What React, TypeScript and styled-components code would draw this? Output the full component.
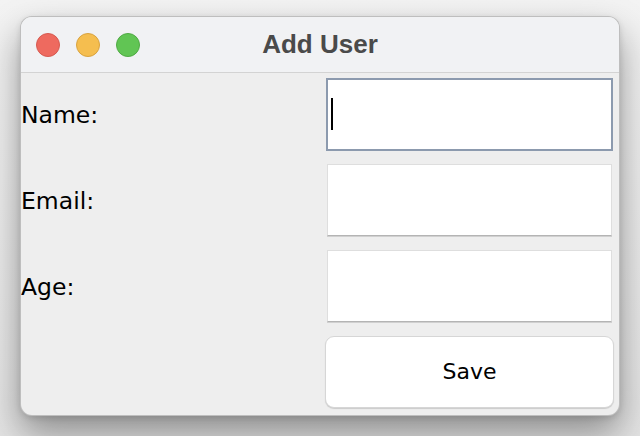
import React from "react";
import styled, { createGlobalStyle } from "styled-components";

const Global = createGlobalStyle`
  html, body { margin: 0; padding: 0; }
  body {
    width: 640px;
    height: 436px;
    overflow: hidden;
    background: linear-gradient(#f3f3f3, #e4e4e4);
    font-family: "DejaVu Sans", "Liberation Sans", sans-serif;
  }
  #root { padding: 16px 20px; }
`;

const Window = styled.div`
  width: 600px;
  height: 400px;
  box-sizing: border-box;
  border-radius: 12px;
  overflow: hidden;
  background: #eeeeee;
  border: 1px solid rgba(0, 0, 0, 0.2);
  box-shadow: 0 18px 36px rgba(0, 0, 0, 0.38), 0 2px 6px rgba(0, 0, 0, 0.12);
  display: flex;
  flex-direction: column;
`;

const TitleBar = styled.div`
  height: 55px;
  flex: none;
  background: #f1f2f4;
  border-bottom: 1px solid #d3d3d3;
  display: flex;
  align-items: center;
  padding-left: 15px;
  gap: 16px;
  position: relative;
`;

const Light = styled.div<{ $c: string; $b: string }>`
  width: 24px;
  height: 24px;
  border-radius: 50%;
  box-sizing: border-box;
  background: ${(p) => p.$c};
  border: 1px solid ${(p) => p.$b};
`;

const Title = styled.div`
  position: absolute;
  left: 0;
  right: 0;
  top: 0;
  bottom: 0;
  display: flex;
  align-items: center;
  justify-content: center;
  font-family: "Liberation Sans", Arial, sans-serif;
  font-weight: 700;
  font-size: 26px;
  color: #4a4a4a;
  pointer-events: none;
`;

const Form = styled.div`
  flex: 1;
  display: grid;
  grid-template-columns: 305px 287px;
  grid-template-rows: repeat(4, 72px);
  row-gap: 14px;
  padding-top: 5px;
  align-items: center;
`;

const Label = styled.div`
  font-size: 23.5px;
  color: #000;
  margin-top: 2px;
`;

const Field = styled.div<{ $focused?: boolean }>`
  height: 72px;
  box-sizing: border-box;
  background: #fff;
  display: flex;
  align-items: center;
  padding-left: 3px;
  ${(p) =>
    p.$focused
      ? `border: 2px solid #8c9aae; height: 73px;`
      : `border: 1px solid #dedede; border-bottom-color: #b4b4b4; margin: 0 1px; box-shadow: 0 1px 0 #d0d0d0;`}
`;

const Caret = styled.div`
  width: 2px;
  height: 32px;
  background: #000;
`;

const Button = styled.button`
  height: 72px;
  box-sizing: border-box;
  background: #fff;
  border: 1px solid #d6d6d6;
  border-radius: 9px;
  box-shadow: 0 1px 1px rgba(0, 0, 0, 0.15);
  font-family: "DejaVu Sans", sans-serif;
  font-size: 22px;
  color: #000;
  padding: 0 0 2px;
  margin-left: -1px;
  width: 289px;
`;

export default function App() {
  return (
    <>
      <Global />
      <Window>
        <TitleBar>
          <Light $c="#ee6a5f" $b="#d65a50" />
          <Light $c="#f5be4f" $b="#d9a33f" />
          <Light $c="#61c554" $b="#50aa44" />
          <Title>Add User</Title>
        </TitleBar>
        <Form>
          <Label>Name:</Label>
          <Field $focused>
            <Caret />
          </Field>
          <Label>Email:</Label>
          <Field />
          <Label>Age:</Label>
          <Field />
          <div />
          <Button>Save</Button>
        </Form>
      </Window>
    </>
  );
}
